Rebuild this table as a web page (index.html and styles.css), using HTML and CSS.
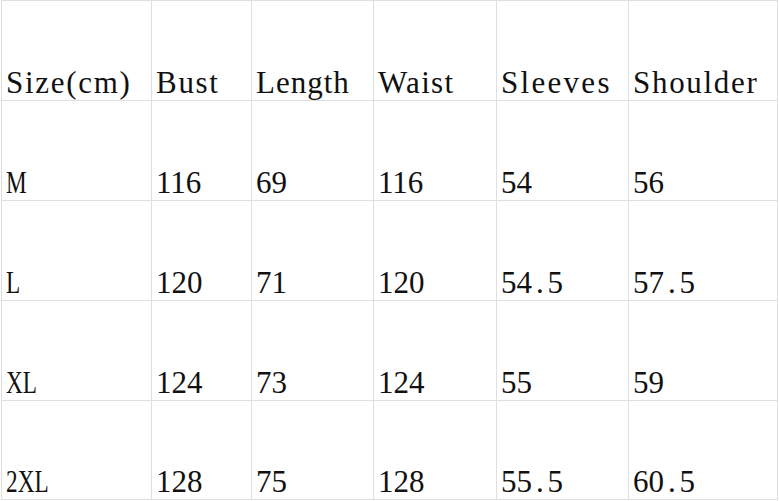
FILE: index.html
```html
<!DOCTYPE html>
<html>
<head>
<meta charset="utf-8">
<link rel="stylesheet" href="styles.css">
</head>
<body>
<div class="sheet">
  <div class="cell"><span class="w h1">Size(cm)</span></div>
  <div class="cell"><span class="w h2">Bust</span></div>
  <div class="cell"><span class="w h3">Length</span></div>
  <div class="cell"><span class="w h4">Waist</span></div>
  <div class="cell"><span class="w h5">Sleeves</span></div>
  <div class="cell"><span class="w h6">Shoulder</span></div>

  <div class="cell"><span class="sz">M</span></div>
  <div class="cell">116</div>
  <div class="cell">69</div>
  <div class="cell">116</div>
  <div class="cell">54</div>
  <div class="cell">56</div>

  <div class="cell"><span class="sz">L</span></div>
  <div class="cell">120</div>
  <div class="cell">71</div>
  <div class="cell">120</div>
  <div class="cell">54<span class="pt">.</span>5</div>
  <div class="cell">57<span class="pt">.</span>5</div>

  <div class="cell"><span class="sz">XL</span></div>
  <div class="cell">124</div>
  <div class="cell">73</div>
  <div class="cell">124</div>
  <div class="cell">55</div>
  <div class="cell">59</div>

  <div class="cell"><span class="sz">2XL</span></div>
  <div class="cell">128</div>
  <div class="cell">75</div>
  <div class="cell">128</div>
  <div class="cell">55<span class="pt">.</span>5</div>
  <div class="cell">60<span class="pt">.</span>5</div>
</div>
</body>
</html>
```
FILE: styles.css
```css
html, body {
  margin: 0;
  padding: 0;
  background: #ffffff;
}

.sheet {
  display: grid;
  grid-template-columns: 149px 99px 121px 122px 131px 148px;
  grid-template-rows: 99px 99px 99px 99px 98px;
  gap: 1px;
  padding: 1px;
  margin-left: 1px;
  width: max-content;
  background: #dfdfdf;
  font-family: "Liberation Serif", "Times New Roman", serif;
  font-size: 31px;
  line-height: 31px;
  color: #111111;
}

.cell {
  background: #ffffff;
  display: flex;
  align-items: flex-end;
  padding: 0 0 2px 4px;
  white-space: nowrap;
}

.w { letter-spacing: 1.7px; }
.h3 { letter-spacing: 1px; }
.h4 { letter-spacing: 1.3px; }
.h5 { letter-spacing: 2.3px; }

.sz {
  display: inline-block;
  transform: scaleX(0.75);
  transform-origin: left bottom;
}

.pt {
  display: inline-block;
  width: 0.5em;
  text-align: center;
}
```
